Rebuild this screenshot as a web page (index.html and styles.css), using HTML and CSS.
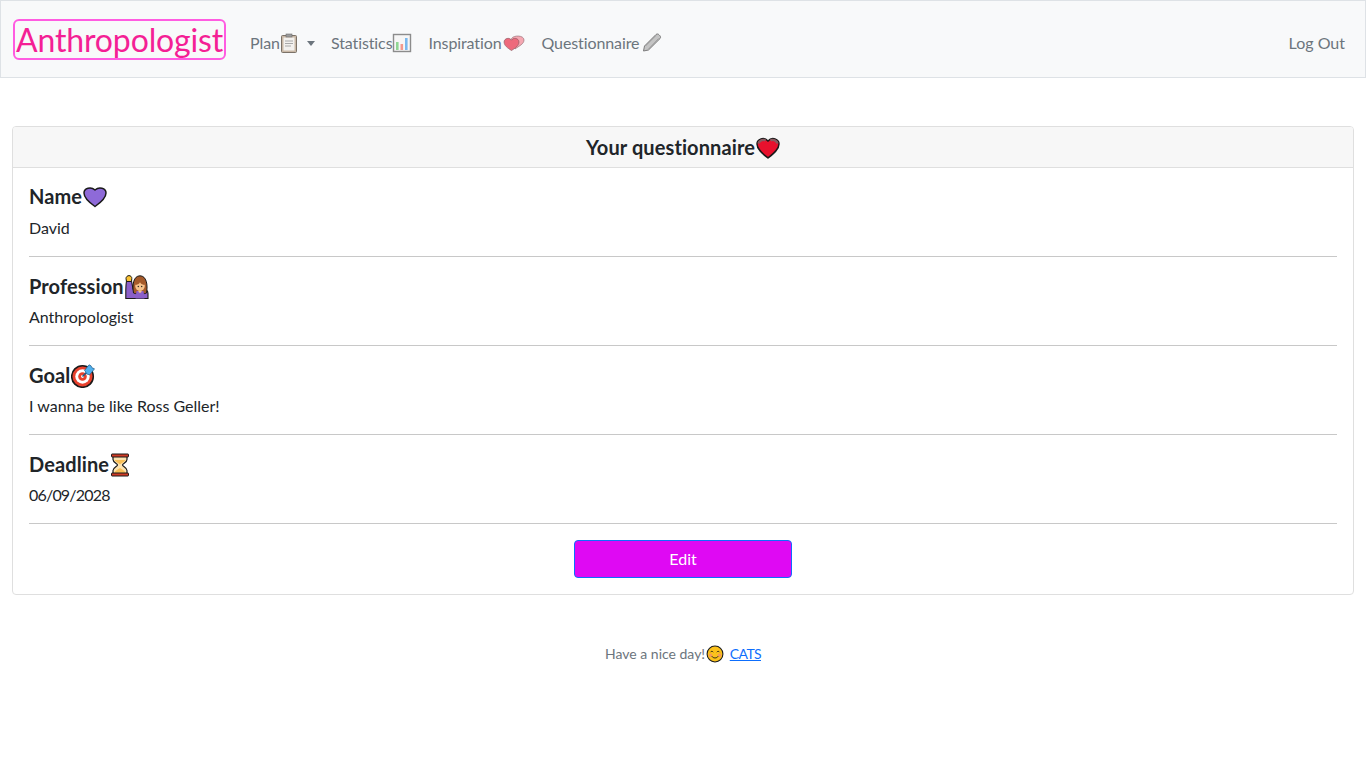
FILE: index.html
```html
<!DOCTYPE html>
<html lang="en">
<head>
<meta charset="utf-8">
<title>Anthropologist</title>
<link rel="stylesheet" href="styles.css">
</head>
<body>
<nav class="navbar">
  <a class="brand" href="#">Anthropologist</a>
  <ul class="nav-list">
    <li><a class="nav-link" href="#">Plan<svg class="emoji emoji-plan" viewBox="1 0 18 20"><rect x="2.500" y="2.500" width="15" height="17" rx="1" fill="#c9b8a6" stroke="#7b7268"/><rect x="4.500" y="4.500" width="11" height="13" fill="#f3f1ee"/><rect x="7" y="1" width="6" height="3" fill="#9c9c9c" stroke="#6d6d6d" stroke-width=".6"/><path d="M6 8h8M6 10.500h8M6 13h6" stroke="#a8a8a8"/></svg><span class="caret"></span></a></li>
    <li><a class="nav-link" href="#">Statistics<svg class="emoji" viewBox="0 0 20 20"><rect x="1.500" y="1.500" width="17" height="17" fill="#f6f6f6" stroke="#8c8c8c" stroke-width="1.400"/><rect x="4" y="9" width="2.600" height="8" fill="#8fd694"/><rect x="8.500" y="11" width="2.600" height="6" fill="#f2998e"/><rect x="13" y="5" width="2.600" height="12" fill="#79b8ee"/></svg></a></li>
    <li><a class="nav-link" href="#">Inspiration<svg class="emoji emoji-hearts" viewBox="0 0 23 20"><path d="M9 5.500c2-3.500 12.500-3.500 12.500 1.500 0 4-5 6-9 9z" fill="#f5a8b2" stroke="#99737a" stroke-width=".7"/><path d="M9 17.500C5 15 1.600 12.500 1.600 9c0-3.800 5.500-5 7.400-1.800 1.900-3.200 7.400-2 7.400 1.800 0 3.500-3.400 6-7.400 8.500z" fill="#ee6a7c" stroke="#8f5c64" stroke-width=".7"/></svg></a></li>
    <li><a class="nav-link" href="#">Questionnaire<svg class="emoji emoji-pencil" viewBox="0 0 20 20"><path d="M2 18l1-5L14.500 1.500c1-.8 2.300-.6 3 .3l1 1c.8.900.7 2 0 2.800L7 17z" fill="#c4c4c4" stroke="#7c7c7c"/><path d="M4 13l10.500-10.500M7 16 17 5.500" stroke="#8f8f8f" stroke-width=".7"/></svg></a></li>
  </ul>
  <a class="nav-link logout" href="#">Log Out</a>
</nav>

<main class="page">
  <section class="card">
    <header class="card-header">
      <h2 class="card-title">Your questionnaire<svg class="emoji emoji-lg" viewBox="0 0 24 24"><path d="M12 22C7 18 1 13.500 1 8c0-5 7-7.500 11-3 4-4.500 11-2 11 3 0 5.500-6 10-11 14z" fill="#e8112d" stroke="#1a1a1a" stroke-width="1.500"/><path d="M2.500 7.500c.5-3 4.500-4.500 7-3M21.500 7.500c-.5-3-4.500-4.500-7-3" stroke="#8a5a60" stroke-width="2.400" fill="none"/></svg></h2>
    </header>
    <div class="card-body">
      <div class="field">
        <h3 class="field-title">Name<svg class="emoji emoji-lg" viewBox="0 0 24 24"><path d="M12 21.500C7 18 1 13 1 8c0-5 7-6.500 11-3 4-3.500 11-2 11 3 0 5-6 10-11 13.500z" fill="#8e6ad8" stroke="#1a1a1a" stroke-width="1.500"/></svg></h3>
        <p class="field-value">David</p>
      </div>
      <div class="field">
        <h3 class="field-title">Profession<svg class="emoji emoji-lg" viewBox="0 0 24 24"><path d="M.8 23.500V15C.8 12 1 9 1.500 6h5l1.500 8h9c3.500 0 6 1.500 6 4.500v5z" fill="#8b5fc9" stroke="#1a1a1a" stroke-width="1.100"/><path d="M1.500 6.500 1 3.500C1 1.800 2.500.6 4 .6s3 1.300 2.800 3L6.500 6.500z" fill="#fbc233" stroke="#1a1a1a"/><path d="M8.500 18c-1.500-8 0-17.200 6.500-17.200S23 10 21.500 18c-1.500 1-3 .5-3.500 0h-6c-.5.500-2 1-3.500 0z" fill="#a55a2a" stroke="#1a1a1a"/><circle cx="15" cy="11" r="4.800" fill="#f6c28b"/><path d="M10.200 10c1.800 0 4-1 4.800-2.800.8 1.800 3 2.800 4.800 2.800L19 5h-8z" fill="#a55a2a"/><circle cx="13.300" cy="11.500" r=".7" fill="#222"/><circle cx="16.700" cy="11.500" r=".7" fill="#222"/><path d="M11.500 16h7l1 7.500h-9z" fill="#8b5fc9"/><path d="M13.500 15.500h3v1.500l-1.500 1-1.500-1z" fill="#f6c28b"/></svg></h3>
        <p class="field-value">Anthropologist</p>
      </div>
      <div class="field">
        <h3 class="field-title">Goal<svg class="emoji emoji-lg" viewBox="0 0 24 24"><circle cx="11.500" cy="12.500" r="10.800" fill="#e8412d" stroke="#1a1a1a" stroke-width="1.500"/><circle cx="11.500" cy="12.500" r="7.200" fill="#fff"/><circle cx="11.500" cy="12.500" r="4.300" fill="#e8412d"/><circle cx="11.500" cy="12.500" r="1.400" fill="#fff"/><path d="M11.500 12.500 17 7" stroke="#235a85" stroke-width="1.600"/><path d="M13.500 6.500 18 .8l2 1 1 2 2.500 1-4.800 6-3-.8-1.500-3z" fill="#4fb0ee" stroke="#235a85" stroke-width=".7"/></svg></h3>
        <p class="field-value">I wanna be like Ross Geller!</p>
      </div>
      <div class="field">
        <h3 class="field-title">Deadline<svg class="emoji emoji-lg" viewBox="2 0 24 24"><path d="M5 3.500v3c0 3 4.500 4 4.500 5.500S5 14.500 5 17.500v3h14v-3c0-3-4.500-4-4.500-5.500s4.500-2.500 4.500-5.500v-3z" fill="#fde3b0" stroke="#1a1a1a" stroke-width="1.200"/><path d="M6.500 7h11c-.8 2-4.500 3-5.500 4.500C11 10 7.300 9 6.500 7zM6.500 20c0-2.500 4-3.500 5.500-5 1.500 1.500 5.500 2.500 5.500 5z" fill="#f8bf58"/><rect x="3.500" y="1" width="17" height="3" rx=".6" fill="#cf3a25" stroke="#1a1a1a"/><rect x="3.500" y="20" width="17" height="3" rx=".6" fill="#cf3a25" stroke="#1a1a1a"/></svg></h3>
        <p class="field-value field-date">06/09/2028</p>
      </div>
      <div class="actions">
        <button class="btn-edit" type="button">Edit</button>
      </div>
    </div>
  </section>
  <footer class="footer">
    <span>Have a nice day!<svg class="emoji emoji-sm" viewBox="0 0 20 20"><circle cx="10" cy="10" r="8.800" fill="#fcc21b" stroke="#1a1a1a" stroke-width="1.200"/><circle cx="5" cy="11.500" r="2" fill="#f59a5a"/><circle cx="15" cy="11.500" r="2" fill="#f59a5a"/><path d="M5 8c.7-1.300 2.300-1.300 3 0M12 8c.7-1.300 2.300-1.300 3 0" stroke="#1a1a1a" fill="none"/><path d="M6.500 12.500c1.500 2.500 5.500 2.500 7 0" stroke="#1a1a1a" fill="none"/></svg></span>
    <a class="footer-link" href="#">CATS</a>
  </footer>
</main>
</body>
</html>
```
FILE: styles.css
```css
* { box-sizing: border-box; }
html, body { margin: 0; padding: 0; }
body {
  font-family: Lato, "Noto Sans", sans-serif;
  font-size: 16px;
  line-height: 1.5;
  color: #212529;
  background: #fff;
}
a { text-decoration: none; }
.emoji {
  width: 20px;
  height: 20px;
  flex: none;
  vertical-align: -4px;
}
.emoji-plan { width: 18px; }
.emoji-hearts { width: 24px; }
.emoji-pencil { width: 21px; margin-left: 2px; }
.emoji-lg { width: 24px; height: 24px; margin-left: 1px; vertical-align: -5px; }
.emoji-sm { width: 18px; height: 18px; vertical-align: -4px; margin-left: 1px; }

.navbar {
  display: flex;
  align-items: center;
  height: 78px;
  padding: 0 12px;
  background: #f8f9fa;
  border: 1px solid #dee2e6;
}
.brand {
  display: block;
  padding: 0 1px;
  height: 41px;
  margin-right: 16px;
  font-size: 32px;
  letter-spacing: -.14px;
  line-height: 38px;
  color: #f41f95;
  border: 2px solid #ff5ce1;
  border-radius: 6px;
}
.nav-list {
  display: flex;
  align-items: center;
  flex: 1;
  margin: 0;
  padding: 8px 0 0;
  list-style: none;
  letter-spacing: -.1px;
}
.nav-link {
  display: block;
  padding: 8px;
  color: #6c757d;
  font-size: 16px;
  white-space: nowrap;
}
.caret {
  display: inline-block;
  margin-left: 9px;
  vertical-align: 3px;
  border-top: 5px solid #6c757d;
  border-left: 4.5px solid transparent;
  border-right: 4.5px solid transparent;
}
.logout { margin-top: 8px; }

.page { padding: 48px 12px 0; }
.card {
  border: 1px solid #dfdfdf;
  border-radius: 4px;
  overflow: hidden;
}
.card-header {
  height: 41px;
  background: #f7f7f7;
  border-bottom: 1px solid #dfdfdf;
  text-align: center;
}
.card-title {
  margin: 0;
  font-size: 20px;
  font-weight: 700;
  letter-spacing: .1px;
  line-height: 41px;
}
.card-body { padding: 16px; }
.field {
  height: 89px;
  padding-top: 17px;
  border-bottom: 1px solid #c8c8c8;
}
.field:first-child { height: 73px; padding-top: 0; }
.field-title {
  margin: 0 0 6px;
  font-size: 20px;
  font-weight: 700;
  letter-spacing: .1px;
  line-height: 24px;
}
.field:first-child .field-title { margin-bottom: 7px; }
.field-value {
  margin: 0;
  font-size: 16px;
  line-height: 24px;
}
.field-date { letter-spacing: -.8px; }
.actions { display: flex; justify-content: center; padding-top: 16px; }
.btn-edit {
  width: 218px;
  height: 38px;
  padding: 0 0 2px;
  font-family: inherit;
  font-size: 16px;
  color: #fff;
  background: #df09f3;
  border: 1px solid #0d6efd;
  border-radius: 4px;
}
.footer {
  margin-top: 48px;
  text-align: center;
  font-size: 14px;
  color: #6c757d;
}
.footer-link { margin-left: 2px; color: #0d6efd; text-decoration: underline; letter-spacing: -.6px; }
```
